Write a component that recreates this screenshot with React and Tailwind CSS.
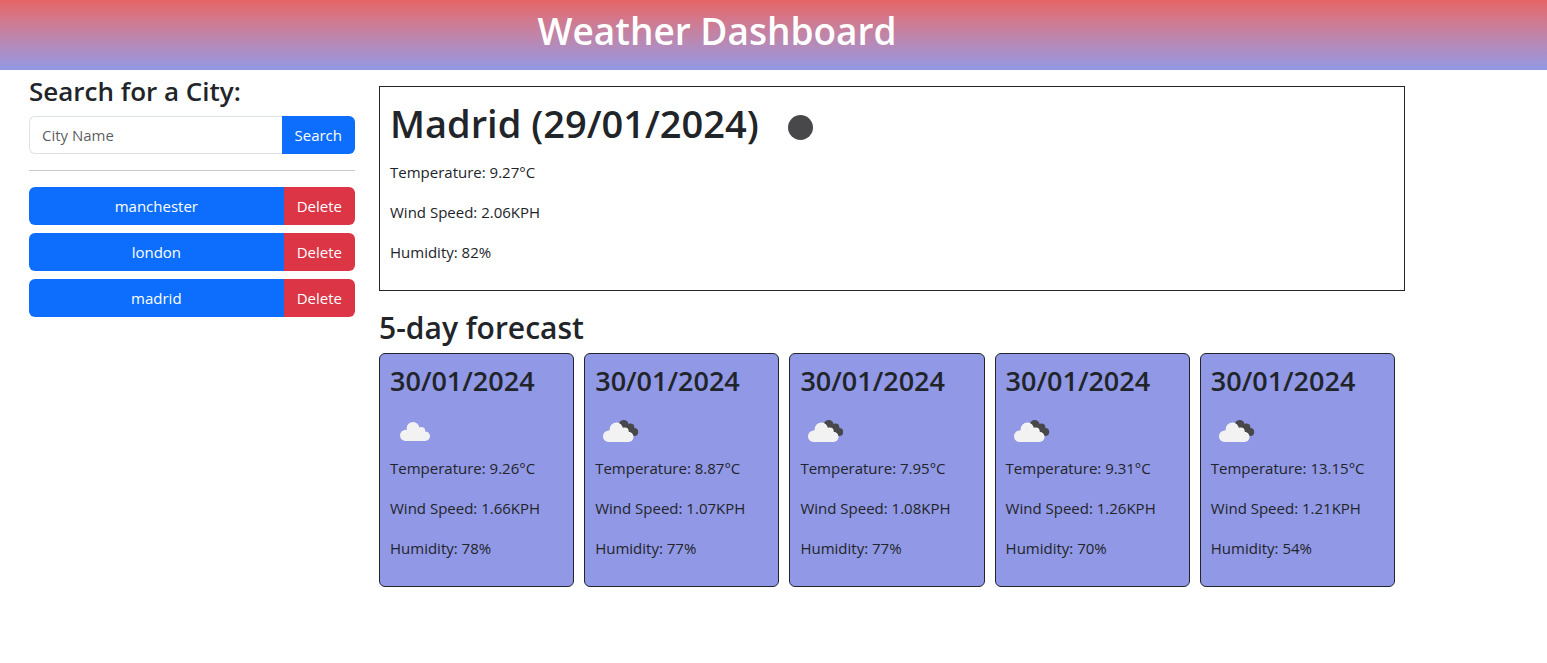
import React from 'react';

const CITIES = ['manchester', 'london', 'madrid'];

const FORECAST = [
  { icon: 'cloud', temp: '9.26', wind: '1.66', humidity: 78 },
  { icon: 'broken', temp: '8.87', wind: '1.07', humidity: 77 },
  { icon: 'broken', temp: '7.95', wind: '1.08', humidity: 77 },
  { icon: 'broken', temp: '9.31', wind: '1.26', humidity: 70 },
  { icon: 'broken', temp: '13.15', wind: '1.21', humidity: 54 },
];

function CloudShape({ fill, transform }) {
  return (
    <g fill={fill} transform={transform}>
      <circle cx="23" cy="22.3" r="6.3" />
      <circle cx="31.2" cy="25" r="4" />
      <circle cx="15.6" cy="29.4" r="5.6" />
      <circle cx="35.2" cy="30.2" r="4.8" />
      <path d="M15.6 24 L19 24 L27 22 L33 27 L35.2 27 V35 H15.6 Z" />
    </g>
  );
}

function WeatherIcon({ type }) {
  return (
    <svg viewBox="0 0 50 50" className="block size-[50px] shrink-0" aria-hidden="true">
      {type === 'clear' && <circle cx="25.5" cy="25.5" r="12.5" fill="#48484a" />}
      {type === 'cloud' && <CloudShape fill="#f2f2f2" />}
      {type === 'broken' && (
        <>
          <g fill="#48484a">
            <circle cx="28.7" cy="19" r="5" />
            <circle cx="35.6" cy="21.2" r="3.7" />
            <circle cx="39.2" cy="26" r="4" />
            <path d="M28 19 L36 19 L40 24 L39 30 L35 30 Z" />
          </g>
          <CloudShape fill="#ffffff" transform="translate(-1.5 0.6)" />
          <CloudShape fill="#f2f2f2" transform="translate(-2 1)" />
        </>
      )}
    </svg>
  );
}

function Readings({ temp, wind, humidity }) {
  return (
    <div className="flex flex-col gap-4 pb-4">
      <p>Temperature: {temp}°C</p>
      <p>Wind Speed: {wind}KPH</p>
      <p>Humidity: {humidity}%</p>
    </div>
  );
}

export default function App() {
  return (
    <div className="font-['Open_Sans','Noto_Sans',sans-serif] text-[15px] leading-6 text-[#212529]">
      <header className="bg-linear-to-b from-[#e66465] to-[#9198e5]">
        <div className="flex h-[70px] max-w-[1434px] items-center justify-center pb-2">
          <h1 className="text-[37px] leading-[52px] font-semibold text-white">Weather Dashboard</h1>
        </div>
      </header>

      <main className="flex max-w-[1434px] px-[17px]">
        <aside className="w-1/4 px-3 pt-1">
          <h3 className="mb-2 text-[26px] leading-[34px] font-semibold">
            <label htmlFor="city">Search for a City:</label>
          </h3>
          <form className="flex h-[38px]" onSubmit={(e) => e.preventDefault()}>
            <input
              id="city"
              type="text"
              placeholder="City Name"
              className="min-w-0 flex-1 rounded-l-md border border-r-0 border-[#dee2e6] px-3 outline-none placeholder:text-[#212529bf]"
            />
            <button type="submit" className="rounded-r-md bg-[#0d6efd] px-[13px] text-white">
              Search
            </button>
          </form>
          <hr className="my-4 border-[#c8c9ca]" />
          <ul className="flex flex-col gap-2">
            {CITIES.map((city) => (
              <li key={city} className="flex h-[38px]">
                <button type="button" className="flex-1 rounded-l-md bg-[#0d6efd] text-white">
                  {city}
                </button>
                <button type="button" className="rounded-r-md bg-[#dc3545] px-[13px] text-white">
                  Delete
                </button>
              </li>
            ))}
          </ul>
        </aside>

        <div className="w-3/4 px-3 pt-4">
          <section className="mb-4 border border-[#212529] p-[10px]">
            <div className="mb-2 flex h-[55px] items-end gap-4">
              <h2 className="self-start text-[38px] leading-[52px] font-semibold">Madrid (29/01/2024)</h2>
              <WeatherIcon type="clear" />
            </div>
            <Readings temp="9.27" wind="2.06" humidity={82} />
          </section>

          <h2 className="mb-1 text-[30px] leading-[42px] font-semibold">5-day forecast</h2>
          <div className="grid grid-cols-5 gap-[10px] pr-[10px]">
            {FORECAST.map((day, i) => (
              <article key={i} className="rounded-md border border-[#212529] bg-[#9198e5] p-[10px]">
                <h3 className="mb-2 text-[27px] leading-[34px] font-semibold">30/01/2024</h3>
                <WeatherIcon type={day.icon} />
                <Readings temp={day.temp} wind={day.wind} humidity={day.humidity} />
              </article>
            ))}
          </div>
        </div>
      </main>
    </div>
  );
}
